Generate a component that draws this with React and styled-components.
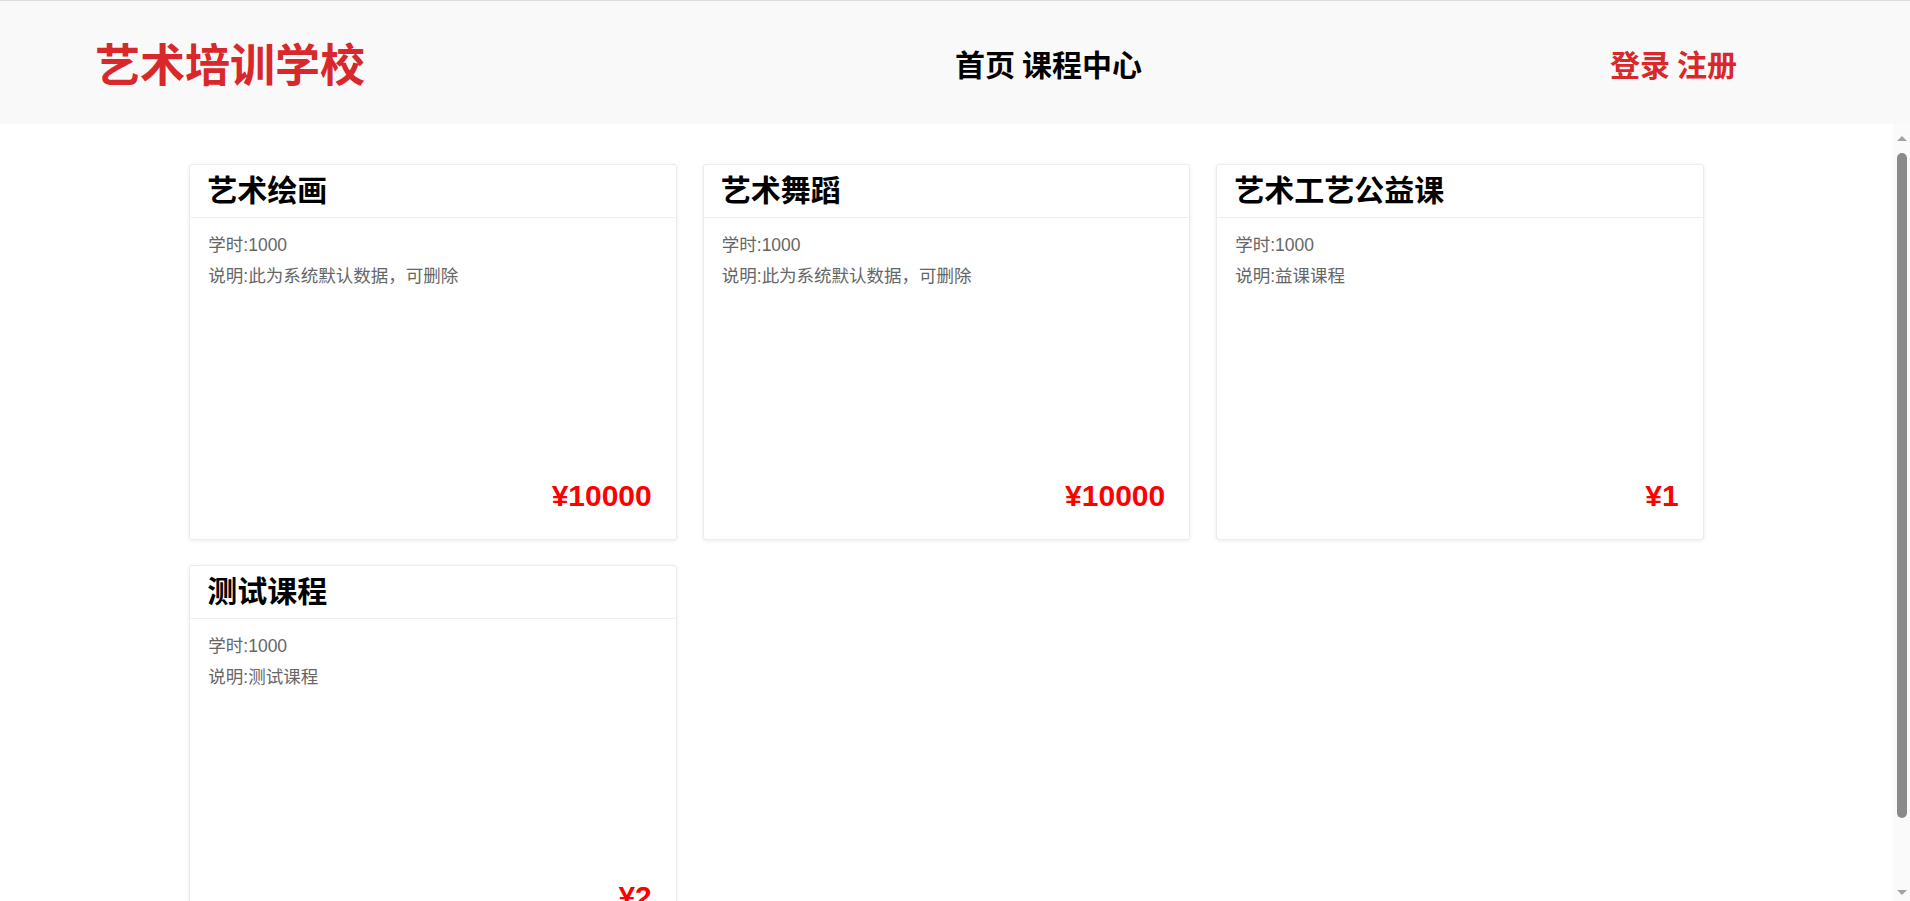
import styled, { createGlobalStyle } from 'styled-components';

const GlobalStyle = createGlobalStyle`
    html, body {
        margin: 0;
        padding: 0;
        height: 100%;
        overflow: hidden;
        font-family: "Liberation Sans", "Noto Sans CJK SC", sans-serif;
    }
`;

const Page = styled.div`
    height: 100vh;
    display: flex;
    flex-direction: column;
    box-sizing: border-box;
    border-top: 1px solid #dcdcdc;
`;

const Header = styled.header`
    flex: 0 0 123px;
    display: grid;
    grid-template-columns: 860px 655px auto;
    align-items: center;
    padding-left: 95px;
    background: #f9f9f9;
`;

const Logo = styled.div`
    font-size: 45px;
    font-weight: bold;
    color: #d9282b;
`;

const NavLinks = styled.nav`
    display: flex;
    gap: 7px;
    font-size: 30px;
    font-weight: bold;
    color: ${(props) => props.color || '#000'};
`;

const NavLink = styled.a`
    cursor: pointer;
`;

const Body = styled.div`
    flex: 1;
    min-height: 0;
    display: flex;
    background: #fff;
`;

const Main = styled.main`
    flex: 1;
    overflow: hidden;
`;

// the page's own scrollbar, as the browser drew it
const ScrollBar = styled.div`
    flex: 0 0 17px;
    display: flex;
    flex-direction: column;
    align-items: center;
    background: #fafafa;
`;

const ScrollArrow = styled.div`
    flex: 0 0 ${(props) => (props.down ? '17px' : '29px')};
    display: flex;
    align-items: center;
    justify-content: center;
    margin-top: ${(props) => (props.down ? 'auto' : '0')};

    &::before {
        content: '';
        border-left: 5px solid transparent;
        border-right: 5px solid transparent;
        border-${(props) => (props.down ? 'top' : 'bottom')}: 5px solid #a3a3a3;
    }
`;

const ScrollThumb = styled.div`
    width: 10px;
    border-radius: 5px;
    background: #8a8a8a;
`;

const CourseGrid = styled.div`
    width: 80%;
    margin: 40px auto;
    display: grid;
    grid-template-columns: repeat(3, 1fr);
    column-gap: 26px;
    row-gap: 25px;
`;

const Card = styled.div`
    height: 376px;
    display: flex;
    flex-direction: column;
    box-sizing: border-box;
    background: #fff;
    border: 1px solid #ececec;
    border-radius: 3px;
    box-shadow: 0 1px 4px rgba(0, 0, 0, 0.08);
`;

const CardTitle = styled.h2`
    margin: 0;
    height: 53px;
    box-sizing: border-box;
    display: flex;
    align-items: center;
    padding: 0 17px 7px;
    font-size: 30px;
    font-weight: bold;
    color: #000;
    border-bottom: 1px solid #f0f0f0;
`;

const CardBody = styled.div`
    flex: 1;
    padding: 12px 18px 0;
    font-size: 17.5px;
    line-height: 31px;
    color: #666;
`;

const Price = styled.div`
    padding: 0 24px 28px;
    text-align: right;
    font-size: 30px;
    line-height: 30px;
    font-weight: bold;
    color: #f00;
`;

const courses = [
    { name: '艺术绘画', hours: 1000, desc: '此为系统默认数据，可删除', price: 10000 },
    { name: '艺术舞蹈', hours: 1000, desc: '此为系统默认数据，可删除', price: 10000 },
    { name: '艺术工艺公益课', hours: 1000, desc: '益课课程', price: 1 },
    { name: '测试课程', hours: 1000, desc: '测试课程', price: 2 },
];

function App() {
    function _renderCourses(list) {
        return list.map((course) => (
            <Card key={course.name}>
                <CardTitle>{course.name}</CardTitle>
                <CardBody>
                    <div>学时:{course.hours}</div>
                    <div>说明:{course.desc}</div>
                </CardBody>
                <Price>¥{course.price}</Price>
            </Card>
        ));
    }

    return (
        <Page>
            <GlobalStyle />
            <Header>
                <Logo>艺术培训学校</Logo>
                <NavLinks>
                    <NavLink>首页</NavLink>
                    <NavLink>课程中心</NavLink>
                </NavLinks>
                <NavLinks color="#d9282b">
                    <NavLink>登录</NavLink>
                    <NavLink>注册</NavLink>
                </NavLinks>
            </Header>
            <Body>
                <Main>
                    <CourseGrid>{_renderCourses(courses)}</CourseGrid>
                </Main>
                <ScrollBar>
                    <ScrollArrow />
                    <ScrollThumb style={{ height: 665 }} />
                    <ScrollArrow down />
                </ScrollBar>
            </Body>
        </Page>
    );
}

export default App;
